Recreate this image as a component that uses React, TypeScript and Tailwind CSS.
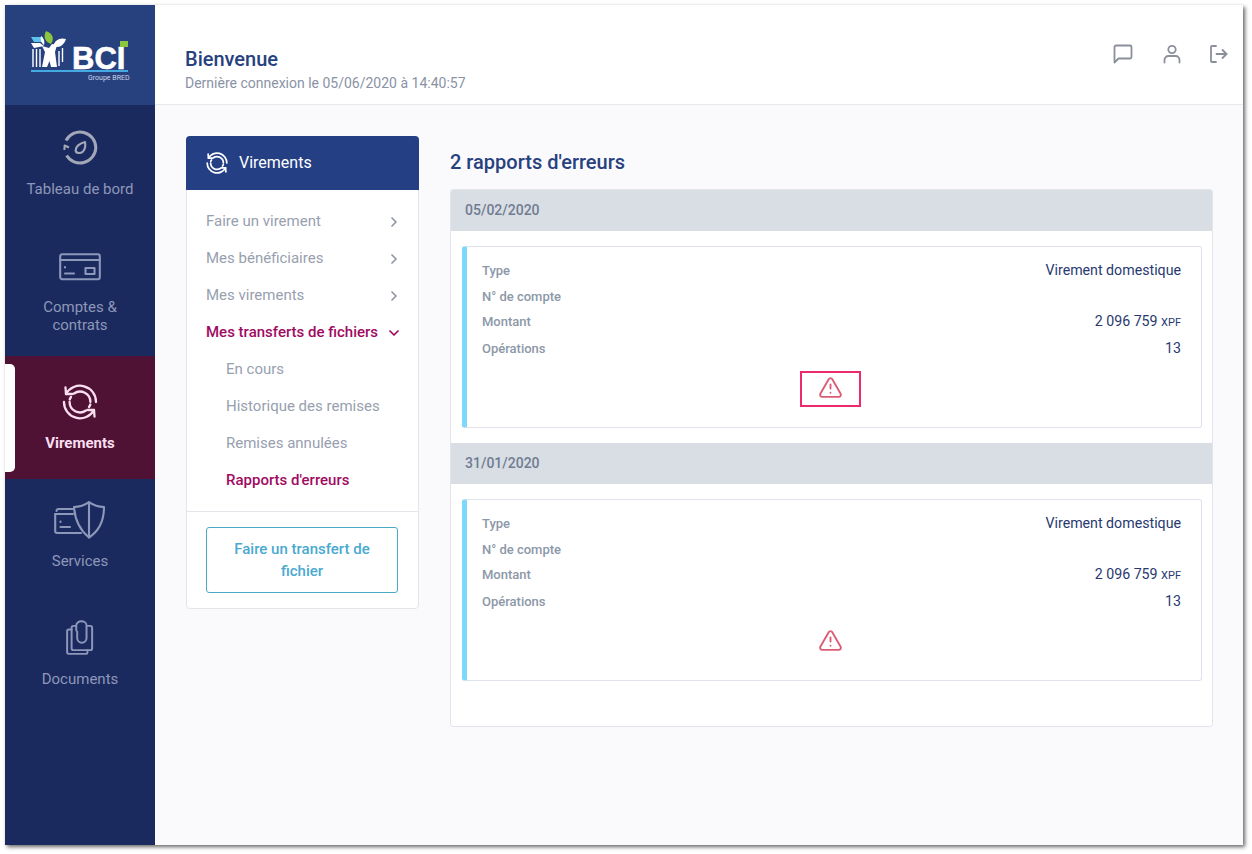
import React from "react";
import { ChevronRight, ChevronDown, TriangleAlert } from "lucide-react";

const F = { fontFamily: "Roboto, 'Liberation Sans', sans-serif" };

function Exchange({ className, w = 2.3 }: { className?: string; w?: number }) {
  return (
    <svg viewBox="0 0 36 36" fill="none" stroke="currentColor" strokeWidth={w} strokeLinecap="round" strokeLinejoin="round" className={className}>
      <path d="M4 10 A 16 16 0 0 1 34 18" />
      <path d="M3.5 3.5 L4 10 L10.5 10" />
      <path d="M32 26 A 16 16 0 0 1 2 18" />
      <path d="M32.5 32.5 L32 26 L25.5 26" />
      <path d="M12 9.5 A 10.4 10.4 0 0 1 28.4 18" />
      <path d="M24 26.5 A 10.4 10.4 0 0 1 7.6 18" />
      <path d="M7.7 15.5 A 10.4 10.4 0 0 1 9 13" />
      <path d="M28.3 20.5 A 10.4 10.4 0 0 1 27 23" />
    </svg>
  );
}
function Gauge({ className }: { className?: string }) {
  return (
    <svg viewBox="0 0 36 36" fill="none" stroke="currentColor" strokeWidth="3" strokeLinecap="butt" strokeLinejoin="round" className={className}>
      <path d="M4.6 25.5 A 15.8 15.8 0 0 0 33.8 18 A 15.8 15.8 0 0 0 4 10.5" />
      <path d="M2.4 20 L2.6 15.5 L7 17.5" strokeWidth="2" />
      <path d="M23 12 C23.6 15.5 23.2 19 21 21.5 C18.5 23.8 14 23.6 13.6 20.5 C13.3 17 17.5 13.2 23 12 Z" strokeWidth="2.1" />
    </svg>
  );
}
function CardIcon({ className }: { className?: string }) {
  return (
    <svg viewBox="0 0 42 28" fill="none" stroke="currentColor" strokeWidth="2.1" strokeLinecap="round" strokeLinejoin="round" className={className}>
      <rect x="1.2" y="1.2" width="39.6" height="25" rx="2" />
      <path d="M1.2 7 H40.8" />
      <path d="M6 14 V14.5" />
      <path d="M6 20.5 H15" />
      <rect x="26.5" y="15" width="9" height="6" />
    </svg>
  );
}
function Shield({ className }: { className?: string }) {
  return (
    <svg viewBox="0 0 52 38" fill="none" stroke="currentColor" strokeWidth="2.1" strokeLinecap="round" strokeLinejoin="round" className={className}>
      <path d="M2.5 10 A2 2 0 0 1 4.5 8 H19" />
      <path d="M1.2 13 H19" />
      <path d="M1.2 13 V30 A2 2 0 0 0 3.2 32 H27" />
      <path d="M6.5 20.5 V21" />
      <path d="M6.5 26 H16" />
      <path d="M20 6 C26 6 31 4 35 1.2 C39 4 44 6 50 6 C50 20 45 30 35 36.5 C27 30 21 20 20 6 Z" />
      <path d="M35 1.2 V36.5" />
    </svg>
  );
}
function Docs({ className }: { className?: string }) {
  return (
    <svg viewBox="0 0 30 38" fill="none" stroke="currentColor" strokeWidth="2.1" strokeLinecap="round" strokeLinejoin="round" className={className}>
      <path d="M6 10 H3 A2 2 0 0 0 1.2 12 V34 A2 2 0 0 0 3 36 H21 A2 2 0 0 0 23 34 V32" />
      <path d="M10 6 H8 A2 2 0 0 0 6 8 V30 A2 2 0 0 0 8 32 H26 A2 2 0 0 0 28 30 V8 A2 2 0 0 0 26 6 H23" />
      <path d="M11 11 V5.5 A5.5 4.5 0 0 1 22 5.5 V19 A5 5 0 0 1 12 19 V12" />
    </svg>
  );
}
function Logo() {
  return (
    <div className="relative w-[100px] h-[54px]">
      <svg viewBox="0 0 40 40" className="absolute left-0 top-0 w-[40px] h-[40px]">
        <path d="M16 1 C22 3 25 8 21 14 C15 12 13 7 16 1 Z" fill="#8cc63f" />
        <path d="M1 7 L11 7 L13 12 L4 12 Z" fill="#5cc3ee" />
        <path d="M23 16 C25 10 30 7 36 9 C34 15 29 19 23 16 Z" fill="#fff" />
        <path d="M1 13 L10 13 L14 16 L4 18 Z" fill="#fff" />
        <path d="M11 6 C14 8 15 12 14 15 C11 13 10 10 11 6 Z" fill="#fff" />
        <path d="M3 19 V37 M6.5 19 V37 M10 19 V37" stroke="#fff" strokeWidth="1.4" />
        <path d="M12 16 L19 18 L22 14 L27 15 L25 22 L27 37 H21 L19.5 31 L17 37 H12 L15 22 Z" fill="#fff" />
        <path d="M29 21 V36 M32.5 18 V32" stroke="#fff" strokeWidth="1.4" />
      </svg>
      <span className="absolute left-[42px] top-[16px] text-white text-[31px] leading-[26px]" style={{ fontFamily: "'Liberation Sans', sans-serif", fontWeight: 700, WebkitTextStroke: "0.6px #fff" }}>BCI</span>
      <div className="absolute left-[90px] top-[11px] w-[8px] h-[6px] bg-[#8cc63f]" />
      <div className="absolute left-[1px] top-[40px] w-[97px] h-[2px] bg-[#45a9e2]" />
      <div className="absolute left-[58px] top-[43px] text-[7px] leading-[10px] text-[#cfd6e8] whitespace-nowrap">Groupe BRED</div>
    </div>
  );
}

function NavItem({ icon, label, active, cls, lc = "mt-[13px]" }: { icon: React.ReactNode; label: React.ReactNode; active?: boolean; cls: string; lc?: string }) {
  return (
    <div className={`relative flex flex-col items-center text-center text-[15px] leading-[18px] ${cls} ${active ? "bg-[#4f1235] text-[#fbdff0] font-bold" : "text-[#8d97b9]"}`}>
      <div className="h-[38px] flex items-center justify-center">{icon}</div>
      <div className={lc}>{label}</div>
      {active && <div className="absolute left-0 top-[8px] w-[10px] h-[108px] bg-white rounded-r-[5px]" />}
    </div>
  );
}

function MenuRow({ text, state, sub }: { text: string; state?: "right" | "down"; sub?: boolean }) {
  const active = text === "Mes transferts de fichiers" || text === "Rapports d'erreurs";
  return (
    <div className={`flex items-center justify-between h-[37px] pr-[16px] ${sub ? "pl-[39px]" : "pl-[19px]"} text-[15px] ${active ? "text-[#a00b62] font-medium" : "text-[#98a0af]"}`}>
      <span>{text}</span>
      {state === "right" && <ChevronRight size={16} strokeWidth={2.6} className="text-[#8f97a6]" />}
      {state === "down" && <ChevronDown size={16} strokeWidth={2.6} />}
    </div>
  );
}

function Row({ k, v, h }: { k: string; v?: React.ReactNode; h: string }) {
  return (
    <div className={`flex items-center justify-between ${h}`}>
      <span className="text-[13px] font-medium text-[#8c98a8]">{k}</span>
      <span className="text-[14.2px] text-[#27396f]">{v}</span>
    </div>
  );
}

function Report({ date, boxed, last }: { date: string; boxed?: boolean; last?: boolean }) {
  return (
    <div>
      <div className="h-[41px] bg-[#d9dee5] flex items-center pl-[14px] text-[14px] font-medium text-[#6f7c91]">{date}</div>
      <div className={`pl-[11px] pr-[10px] pt-[15px] ${last ? "pb-[45px]" : "pb-[15px]"}`}>
        <div className="h-[182px] border border-[#dfe2e8] border-l-[5px] border-l-[#7dd8fb] rounded-[3px] bg-white pl-[15px] pr-[20px] pt-[11px]">
          <Row k="Type" h="h-[26px]" v="Virement domestique" />
          <Row k="N° de compte" h="h-[26px]" />
          <Row k="Montant" h="h-[24px]" v={<>2 096 759 <span className="text-[11px]">XPF</span></>} />
          <Row k="Opérations" h="h-[30px]" v="13" />
          <div className="flex justify-center mt-[7px] pr-[3px]">
            <div className={`w-[61px] h-[36px] border-2 flex items-center justify-center pb-[4px] ${boxed ? "border-[#ee2a6f]" : "border-transparent"}`}>
              <TriangleAlert size={25} strokeWidth={1.8} className="text-[#dc5c76]" />
            </div>
          </div>
        </div>
      </div>
    </div>
  );
}

export default function App() {
  return (
    <div className="w-[1252px] h-[854px] bg-white pl-[5px] pt-[5px] pr-[9px] pb-[9px] overflow-hidden" style={F}>
      <div className="w-full h-full flex bg-[#fafafd] shadow-[2px_2px_4px_rgba(0,0,0,0.6)]">
        <aside className="w-[150px] shrink-0 bg-[#1b2a5e] flex flex-col">
          <div className="h-[100px] bg-[#27417f] flex items-start justify-center pt-[25px] shrink-0">
            <Logo />
          </div>
          <NavItem cls="h-[120px] pt-[24px]" icon={<Gauge className="w-[36px] h-[36px] text-[#a3a8b8]" />} label="Tableau de bord" />
          <NavItem cls="h-[131px] pt-[23px]" lc="mt-[12px]" icon={<CardIcon className="w-[42px] h-[28px] text-[#8d97b9]" />} label={<>Comptes &<br />contrats</>} />
          <NavItem active cls="h-[123px] pt-[27px]" icon={<Exchange className="w-[36px] h-[36px]" />} label="Virements" />
          <NavItem cls="h-[118px] pt-[22px]" icon={<Shield className="w-[52px] h-[38px] text-[#8d97b9]" />} label="Services" />
          <NavItem cls="h-[118px] pt-[22px]" icon={<Docs className="w-[28px] h-[36px] text-[#8d97b9]" />} label="Documents" />
        </aside>
        <div className="flex-1 flex flex-col min-w-0">
          <header className="h-[100px] bg-white border-b border-[#e8e9ee] flex items-center justify-between pl-[30px] pr-[14px] shrink-0">
            <div className="pt-[30px]">
              <div className="text-[20px] leading-[26px] font-medium text-[#27417f]">Bienvenue</div>
              <div className="text-[14px] leading-[22px] text-[#8a93a5]">Dernière connexion le 05/06/2020 à 14:40:57</div>
            </div>
            <div className="flex items-center gap-[29px] pb-[2px] text-[#8a8f9b]">
              <svg viewBox="0 0 20 20" fill="none" stroke="currentColor" strokeWidth="1.8" strokeLinejoin="round" className="w-[20px] h-[20px]"><path d="M1.5 18.5 V3 A1.5 1.5 0 0 1 3 1.5 H17 A1.5 1.5 0 0 1 18.5 3 V13 A1.5 1.5 0 0 1 17 14.5 H5.5 Z" /></svg>
              <svg viewBox="0 0 20 20" fill="none" stroke="currentColor" strokeWidth="1.8" strokeLinecap="round" className="w-[20px] h-[20px]"><circle cx="10" cy="5.5" r="3.7" /><path d="M2.5 18.5 V16 A4 4 0 0 1 6.5 12 H13.5 A4 4 0 0 1 17.5 16 V18.5" /></svg>
              <svg viewBox="0 0 20 20" fill="none" stroke="currentColor" strokeWidth="1.8" strokeLinecap="round" strokeLinejoin="round" className="w-[20px] h-[20px] -ml-[2px]"><path d="M7 2 H3 A1 1 0 0 0 2 3 V17 A1 1 0 0 0 3 18 H7" /><path d="M7.5 10 H17.5" /><path d="M13.5 6 L17.5 10 L13.5 14" /></svg>
            </div>
          </header>
          <main className="flex-1 flex items-start pl-[31px] pr-[30px] pt-[31px] gap-[31px]">
            <section className="w-[233px] shrink-0 bg-white border border-[#e3e5eb] rounded-[4px]">
              <div className="-mx-px -mt-px h-[54px] bg-[#243f84] rounded-t-[4px] flex items-center pl-[20px] gap-[11px] text-white text-[16px]">
                <Exchange className="w-[22px] h-[22px]" w={2.8} />
                <span>Virements</span>
              </div>
              <div className="pt-[13px] pb-[12px] border-b border-[#e3e5eb]">
                <MenuRow text="Faire un virement" state="right" />
                <MenuRow text="Mes bénéficiaires" state="right" />
                <MenuRow text="Mes virements" state="right" />
                <MenuRow text="Mes transferts de fichiers" state="down" />
                <MenuRow text="En cours" sub />
                <MenuRow text="Historique des remises" sub />
                <MenuRow text="Remises annulées" sub />
                <MenuRow text="Rapports d'erreurs" sub />
              </div>
              <div className="pl-[19px] pr-[20px] pt-[15px] pb-[15px]">
                <div className="h-[66px] border border-[#4aa9c4] rounded-[3px] flex items-center justify-center text-center text-[15px] leading-[22px] font-medium text-[#4aa9d0] px-[20px]">Faire un transfert de fichier</div>
              </div>
            </section>
            <section className="flex-1 min-w-0 pt-[13px]">
              <h1 className="text-[20px] leading-[26px] font-medium text-[#27417f] mb-[14px]">2 rapports d'erreurs</h1>
              <div className="bg-white border border-[#e3e5eb] rounded-[3px] overflow-hidden">
                <Report date="05/02/2020" boxed />
                <Report date="31/01/2020" last />
              </div>
            </section>
          </main>
        </div>
      </div>
    </div>
  );
}
